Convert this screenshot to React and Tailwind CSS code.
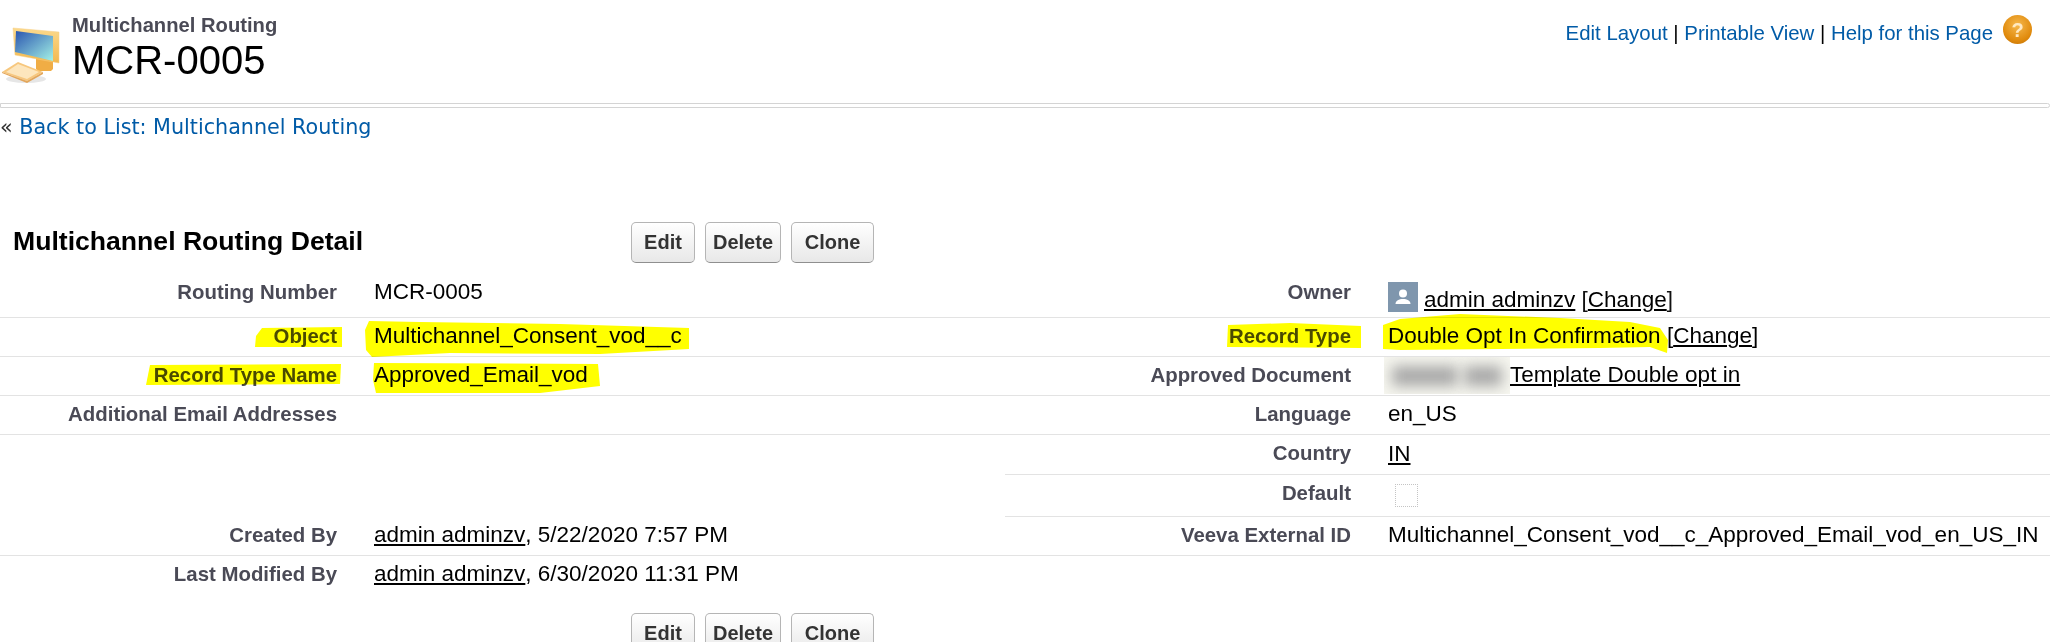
import React from "react";

const arial = "font-['Liberation_Sans',Arial,sans-serif]";

function MonitorIcon() {
  return (
    <svg width="62" height="62" viewBox="0 0 62 62" className="shrink-0">
      <defs>
        <linearGradient id="screen" x1="0" y1="0" x2="1" y2="1">
          <stop offset="0" stopColor="#2a55b0" />
          <stop offset="1" stopColor="#a4f2e6" />
        </linearGradient>
        <linearGradient id="frame" x1="0" y1="0" x2="0" y2="1">
          <stop offset="0" stopColor="#fbd98c" />
          <stop offset="1" stopColor="#f2b84e" />
        </linearGradient>
      </defs>
      <ellipse cx="26" cy="55" rx="20" ry="4" fill="#e6e6e6" />
      <path d="M36 33h17v12l-2 2H38l-2-2z" fill="#f0ad45" />
      <path d="M13 4l46 4v31l-44-8z" fill="url(#frame)" stroke="#f6cf86" strokeWidth="0.5" />
      <path d="M16 7l37 5v25l-38-9z" fill="url(#screen)" />
      <path d="M2 48l16-10 25 10-16 9z" fill="#f7c77d" />
      <path d="M6 48l12-8 21 8-12 7z" fill="#fde6bd" />
      <path d="M2 48l25 9 16-9v2l-16 9-25-10z" fill="#e3a65a" />
    </svg>
  );
}

function HelpIcon() {
  return (
    <span className="ml-[10px] flex h-[29px] w-[29px] items-center justify-center rounded-full bg-[radial-gradient(circle_at_50%_35%,#f6b84c,#e08a0c_65%,#b96c08)] text-[20px] font-bold leading-none text-[#ffe9c2]">
      ?
    </span>
  );
}

function PageButton({ label, width }) {
  return (
    <button
      className={`h-[41px] ${width} rounded-[5px] border border-[#b5b5b5] border-b-[#8f8f8f] bg-gradient-to-b from-white to-[#e8e8e8] pb-[2px] text-[20px] font-bold text-[#333]`}
    >
      {label}
    </button>
  );
}

function ButtonGroup() {
  return (
    <div className="flex gap-[10px]">
      <PageButton label="Edit" width="w-[64px]" />
      <PageButton label="Delete" width="w-[76px]" />
      <PageButton label="Clone" width="w-[83px]" />
    </div>
  );
}

function Link({ children }) {
  return <span className="text-black underline decoration-2 underline-offset-[2px]">{children}</span>;
}

// one label/value row of the detail table
function Row({ label, children, labelWidth, height = "h-[39px] pb-[2px]", border = true }) {
  return (
    <div className={`flex items-center ${height} ${border ? "border-b border-[#e3e3e3]" : ""}`}>
      <div className={`${labelWidth} shrink-0 text-right text-[20.4px] font-bold text-[#4a4a56]`}>{label}</div>
      <div className="ml-[37px] flex min-w-0 items-center whitespace-nowrap text-[22.5px] text-black">{children}</div>
    </div>
  );
}

function Highlights() {
  return (
    <svg width="2050" height="642" className="pointer-events-none absolute left-0 top-0 mix-blend-multiply">
      <g fill="#ffff00">
        <path d="M262 328L342 327L342 347L255 347L256 336z" />
        <path d="M369 321L420 322L560 324L689 328L689 349L600 354L450 353L372 357L366 350L365 330z" />
        <path d="M150 365L341 364L340 384L146 385z" />
        <path d="M374 363L598 364L600 386L540 393L376 393L373 380z" />
        <path d="M1228 325L1290 323L1361 326L1361 348L1227 347z" />
        <path d="M1383 325L1400 319L1460 314L1560 318L1630 322L1660 328L1668 340L1667 353L1650 347L1600 348L1500 349L1400 350L1383 349z" />
      </g>
    </svg>
  );
}

export default function App() {
  return (
    <div className={`relative h-[642px] overflow-hidden bg-white ${arial}`}>
      <div className="flex h-[103px] justify-between">
        <div className="flex items-start pt-[24px]">
          <MonitorIcon />
          <div className="ml-[10px] -mt-[11px]">
            <div className="text-[20.2px] font-bold leading-[24px] text-[#4a4a56]">Multichannel Routing</div>
            <div className="text-[40px] leading-[46px] text-black">MCR-0005</div>
          </div>
        </div>
        <div className="mt-[15px] flex h-[29px] items-start pr-[18px] text-[20.4px] leading-[24px] text-[#015ba7]">
          <span className="mt-[6px]">Edit Layout</span>
          <span className="mt-[6px] whitespace-pre text-black"> | </span>
          <span className="mt-[6px]">Printable View</span>
          <span className="mt-[6px] whitespace-pre text-black"> | </span>
          <span className="mt-[6px]">Help for this Page</span>
          <HelpIcon />
        </div>
      </div>
      <div className="h-[5px] rounded-r-sm border border-[#d4d4d4]" />

      <div className="mt-[5px] font-['DejaVu_Sans',sans-serif] text-[20.7px] leading-[29px] text-[#015ba7]">
        <span className="text-[#333]">« </span>
        Back to List: Multichannel Routing
      </div>

      <div className="mt-[80px] flex h-[41px] items-center">
        <h2 className="w-[631px] pb-[2px] pl-[13px] text-[26.6px] font-bold text-black">Multichannel Routing Detail</h2>
        <ButtonGroup />
      </div>

      <div className="mt-[10px] flex">
        <div className="w-[1005px] shrink-0">
          <Row label="Routing Number" labelWidth="w-[337px]" height="h-[45px] pb-[6px]">MCR-0005</Row>
          <Row label="Object" labelWidth="w-[337px]">Multichannel_Consent_vod__c</Row>
          <Row label="Record Type Name" labelWidth="w-[337px]">Approved_Email_vod</Row>
          <Row label="Additional Email Addresses" labelWidth="w-[337px]" />
          <div className="h-[82px]" />
          <Row label="Created By" labelWidth="w-[337px]">
            <Link>admin adminzv</Link>, 5/22/2020 7:57 PM
          </Row>
        </div>
        <div className="min-w-0 flex-1">
          <Row label="Owner" labelWidth="w-[346px]" height="h-[45px] pb-[6px]">
            <div className="flex items-end pt-[10px]">
              <span className="flex h-[30px] w-[30px] items-center justify-center bg-[#7f96ad]">
                <svg width="22" height="22" viewBox="0 0 22 22" fill="#fff">
                  <circle cx="11" cy="7.5" r="4" />
                  <path d="M3.5 18c0-3.4 3.5-5 7.5-5s7.5 1.6 7.5 5z" />
                </svg>
              </span>
              <span className="ml-[6px] leading-[24px]">
                <Link>admin adminzv</Link> <span className="text-[#111]">[<Link>Change</Link>]</span>
              </span>
            </div>
          </Row>
          <Row label="Record Type" labelWidth="w-[346px]">
            Double Opt In Confirmation&nbsp;<span>[<Link>Change</Link>]</span>
          </Row>
          <Row label="Approved Document" labelWidth="w-[346px]">
            <span className="relative -ml-[4px] h-[37px] w-[126px] overflow-hidden bg-[#f6f6ef]">
              <span className="absolute left-[8px] top-[9px] h-[20px] w-[66px] bg-[#a8a8a8] blur-[7px]" />
              <span className="absolute left-[80px] top-[9px] h-[20px] w-[38px] bg-[#a8a8a8] blur-[7px]" />
            </span>
            <Link>Template Double opt in</Link>
          </Row>
          <Row label="Language" labelWidth="w-[346px]">en_US</Row>
          <Row label="Country" labelWidth="w-[346px]" height="h-[40px] pb-[2px]">
            <Link>IN</Link>
          </Row>
          <Row label="Default" labelWidth="w-[346px]" height="h-[42px] pb-[4px]">
            <span className="ml-[7px] mt-[4px] h-[23px] w-[23px] border border-dotted border-[#c4c4c4]" />
          </Row>
          <Row label="Veeva External ID" labelWidth="w-[346px]">
            Multichannel_Consent_vod__c_Approved_Email_vod_en_US_IN
          </Row>
        </div>
      </div>
      <Row label="Last Modified By" labelWidth="w-[337px]" height="h-[39px] pb-[3px]" border={false}>
        <Link>admin adminzv</Link>, 6/30/2020 11:31 PM
      </Row>

      <div className="mt-[18px] pl-[631px]">
        <ButtonGroup />
      </div>

      <Highlights />
    </div>
  );
}
